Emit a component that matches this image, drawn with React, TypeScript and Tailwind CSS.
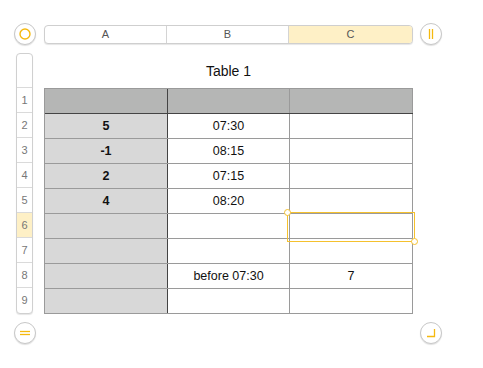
import React from 'react';

const rows: [string, string, string][] = [
  ['', '', ''],
  ['5', '07:30', ''],
  ['-1', '08:15', ''],
  ['2', '07:15', ''],
  ['4', '08:20', ''],
  ['', '', ''],
  ['', '', ''],
  ['', 'before 07:30', '7'],
  ['', '', ''],
];

function CircleButton({ children }: { children: React.ReactNode }) {
  return (
    <div className="w-[22px] h-[22px] rounded-full bg-white border border-[#c8c8c8] shadow-[0_1px_1px_rgba(0,0,0,0.12)] flex items-center justify-center">
      {children}
    </div>
  );
}

export default function App() {
  return (
    <div
      className="w-[483px] h-[368px] bg-white pt-[23px] pl-[14px]"
      style={{ fontFamily: '"Liberation Sans", Arial, sans-serif' }}
    >
      {/* column headers */}
      <div className="flex items-center h-[22px]">
        <CircleButton>
          <svg width="12" height="12" viewBox="0 0 12 12">
            <circle cx="6" cy="6" r="5" fill="none" stroke="#f5b90f" strokeWidth="1.4" />
          </svg>
        </CircleButton>
        <div className="ml-[8px] w-[369px] h-[19px] flex rounded-[4px] border border-[#cfcfcf] bg-white shadow-[0_1px_1px_rgba(0,0,0,0.1)] overflow-hidden text-[11px] text-[#555]">
          <div className="w-[122px] border-r border-[#d4d4d4] flex items-center justify-center">A</div>
          <div className="w-[122px] border-r border-[#d4d4d4] flex items-center justify-center">B</div>
          <div className="flex-1 bg-[#fef0c6] flex items-center justify-center">C</div>
        </div>
        <div className="ml-[7px]">
          <CircleButton>
            <svg width="10" height="12" viewBox="0 0 10 12">
              <line x1="3.5" y1="1" x2="3.5" y2="11" stroke="#f5b90f" strokeWidth="1.3" />
              <line x1="6.5" y1="1" x2="6.5" y2="11" stroke="#f5b90f" strokeWidth="1.3" />
            </svg>
          </CircleButton>
        </div>
      </div>

      <div className="flex mt-[8px]">
        {/* row headers */}
        <div className="ml-[2px] w-[17px] rounded-[4px] border border-[#d0d0d0] bg-white shadow-[0_1px_1px_rgba(0,0,0,0.1)] overflow-hidden text-[11px] text-[#777] flex flex-col">
          <div className="h-[34px] border-b border-[#dadada]" />
          {rows.map((_, i) => (
            <div
              key={i}
              className={`h-[25px] flex items-center justify-center ${i < 8 ? 'border-b border-[#dadada]' : ''} ${i === 5 ? 'bg-[#fef0c6]' : ''}`}
            >
              {i + 1}
            </div>
          ))}
        </div>

        {/* table */}
        <div className="ml-[11px] w-[369px]">
          <div className="h-[35px] flex items-center justify-center text-[14px] text-[#111] pt-[2px]">Table 1</div>
          <div className="relative border-l border-t border-[#9a9a9a] text-[12.5px] text-[#111]">
            {rows.map((r, i) => (
              <div key={i} className={`flex h-[25px] border-b ${i === 0 ? 'border-[#444]' : 'border-[#9a9a9a]'}`}>
                <div
                  className={`w-[123px] border-r border-[#444] flex items-center justify-center font-bold ${i === 0 ? 'bg-[#b5b6b5]' : 'bg-[#d8d8d8]'}`}
                >
                  {r[0]}
                </div>
                <div
                  className={`w-[122px] border-r border-[#9a9a9a] flex items-center justify-center ${i === 0 ? 'bg-[#b5b6b5]' : ''}`}
                >
                  {r[1]}
                </div>
                <div
                  className={`w-[123px] border-r border-[#9a9a9a] flex items-center justify-center ${i === 0 ? 'bg-[#b5b6b5]' : ''}`}
                >
                  {r[2]}
                </div>
              </div>
            ))}
            {/* selection */}
            <div className="absolute left-[242px] top-[123px] w-[128px] h-[30px] border border-[#f5c12e]" />
            <div className="absolute left-[239px] top-[120px] w-[7px] h-[7px] rounded-full bg-white border border-[#f5c12e]" />
            <div className="absolute left-[366px] top-[149px] w-[7px] h-[7px] rounded-full bg-white border border-[#f5c12e]" />
          </div>
        </div>
      </div>

      {/* bottom buttons */}
      <div className="flex mt-[8px] w-[428px] justify-between">
        <CircleButton>
          <svg width="12" height="10" viewBox="0 0 12 10">
            <line x1="1" y1="3.5" x2="11" y2="3.5" stroke="#f5b90f" strokeWidth="1.3" />
            <line x1="1" y1="6.5" x2="11" y2="6.5" stroke="#f5b90f" strokeWidth="1.3" />
          </svg>
        </CircleButton>
        <CircleButton>
          <svg width="12" height="12" viewBox="0 0 12 12">
            <path d="M2 9.5 H9.5 V2" fill="none" stroke="#f5b90f" strokeWidth="1.3" />
          </svg>
        </CircleButton>
      </div>
    </div>
  );
}
